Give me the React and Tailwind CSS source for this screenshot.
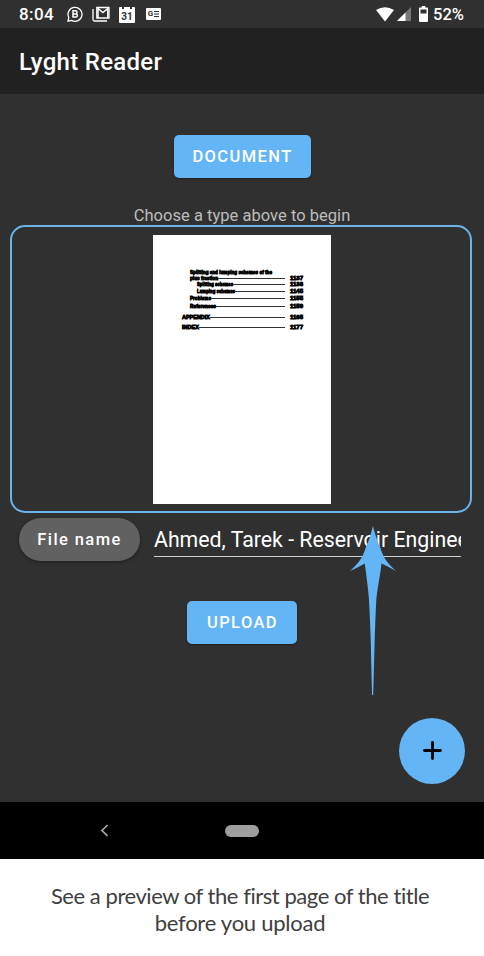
import React from "react";

const contents = [
  { label: "plus fraction", page: "1137", row: "h-[6px] pl-[8px]", len: 28 },
  { label: "Splitting schemes", page: "1138", row: "h-[6px] pl-[15px]", len: 36 },
  { label: "Lumping schemes", page: "1145", row: "h-[7px] pl-[15px]", len: 38 },
  { label: "Problems", page: "1155", row: "h-[7px] pl-[8px]", len: 21 },
  { label: "References", page: "1159", row: "h-[8px] pl-[8px]", len: 26 },
  { label: "APPENDIX", page: "1165", row: "h-[11px]", len: 28 },
  { label: "INDEX", page: "1177", row: "h-[10px]", len: 17 },
];

// A dense bold label fitted to a fixed width, as on a low resolution page scan.
function Ink({ children, len }) {
  return (
    <svg width={len} height="7" className="shrink-0 overflow-visible">
      <text
        x="0"
        y="5.6"
        textLength={len}
        lengthAdjust="spacingAndGlyphs"
        fontSize="5.2"
        fontWeight="700"
        stroke="#000"
        strokeWidth="0.8"
        className="font-['Liberation_Sans',sans-serif]"
      >
        {children}
      </text>
    </svg>
  );
}

function StatusBar() {
  return (
    <div className="flex h-7 items-center bg-[#303030] pl-[19px] pr-[18px] text-white">
      <span className="w-[48px] text-[17px] font-medium leading-7 tracking-[0.4px]">8:04</span>
      <svg width="16" height="16" viewBox="0 0 16 16" fill="none" stroke="#fff" strokeWidth="1.3">
        <path d="M1 15.2 1.8 11.5A7 7 0 1 1 4.6 14.4Z" />
        <path d="M6 4.8H8.5a1.5 1.5 0 0 1 0 3.1H6ZM6 7.9H8.8a1.6 1.6 0 0 1 0 3.2H6Z" strokeWidth="1.5" />
      </svg>
      <svg className="ml-[9px]" width="18" height="16" viewBox="0 0 18 16" fill="none" stroke="#fff">
        <path d="M1 3V13.5Q1 15 2.5 15H15" strokeWidth="1.3" />
        <path d="M4.8 12V1.5H17V12Z" strokeWidth="1.3" />
        <path d="M6 12V2.5L10.9 6.5 15.8 2.5V12" strokeWidth="1.5" />
      </svg>
      <div className="relative ml-[9px] mt-[1px] flex h-4 w-4 items-end justify-center rounded-[1px] bg-white text-[10px] font-bold leading-[13px] text-[#303030]">
        <span>31</span>
        <i className="absolute left-[3px] top-0 size-[2px] bg-[#303030]" />
        <i className="absolute right-[3px] top-0 size-[2px] bg-[#303030]" />
      </div>
      <div className="ml-[11px] flex h-3 w-[15px] items-center justify-center gap-[1px] rounded-[1px] bg-white text-[8px] font-bold text-[#303030]">
        <span>G</span>
        <svg width="5" height="6" stroke="#303030" strokeWidth="1"><path d="M0 .5H5M0 3H5M0 5.5H5" /></svg>
      </div>
      <svg className="ml-auto mr-[3px]" width="18" height="15" viewBox="0 0 18 15">
        <path d="M0 3Q9-2.5 18 3L9 14.5Z" fill="#fff" />
      </svg>
      <svg className="mr-[8px]" width="14" height="14" viewBox="0 0 14 14">
        <path d="M14 0V14H0Z" fill="#777" />
        <path d="M8.5 5.5V14H0Z" fill="#fff" />
      </svg>
      <svg className="mr-[5px]" width="9" height="16" viewBox="0 0 9 16">
        <path d="M2.7 0H6.3V1.5H8Q9 1.5 9 2.5V15Q9 16 8 16H1Q0 16 0 15V2.5Q0 1.5 1 1.5H2.7ZM1.5 3.5V7.5H7.5V3.5Z" fill="#fff" fillRule="evenodd" />
      </svg>
      <span className="w-[33px] whitespace-nowrap pt-[1px] text-[16.5px] font-medium leading-7">52%</span>
    </div>
  );
}

export default function App() {
  return (
    <div className="relative flex h-[956px] w-[484px] flex-col overflow-hidden bg-white font-['Roboto',sans-serif]">
      <StatusBar />
      <header className="flex h-[66px] items-center bg-[#212121] pl-[19px] pt-[1px]">
        <h1 className="text-[24px] font-medium tracking-[0.3px] text-white">Lyght Reader</h1>
      </header>

      <main className="relative flex h-[708px] flex-col items-center bg-[#303030] pt-[41px]">
        <button className="h-[43px] w-[137px] rounded-[5px] bg-[#64b5f6] pl-[1px] pt-[2px] text-[16.5px] font-medium tracking-[1.4px] text-white shadow-[0_1px_2px_#202020]">DOCUMENT</button>
        <p className="mt-7 h-[19px] text-[16.5px] leading-[19px] tracking-[0.03px] text-[#bdbdbd]">Choose a type above to begin</p>

        <section className="mr-[2px] flex h-72 w-[462px] justify-center rounded-[15px] border-2 border-[#6cb3e8] pl-[2px] pt-2">
          <div className="flex h-[269px] w-[178px] flex-col bg-white pl-[29px] pr-[28px] pt-[34px] text-black">
            <div className="flex h-[6px] items-end pl-[8px]">
              <Ink len={82}>Splitting and lumping schemes of the</Ink>
            </div>
            {contents.map((c) => (
              <div key={c.label} className={`flex items-end ${c.row}`}>
                <Ink len={c.len}>{c.label}</Ink>
                <i className="mb-[2px] h-px grow bg-[#333]" />
                <span className="ml-[5px] flex"><Ink len={13}>{c.page}</Ink></span>
              </div>
            ))}
          </div>
        </section>

        <div className="mt-[5px] flex h-[43px] w-[484px] pl-[19px]">
          <button className="h-[43px] w-[121px] rounded-full bg-[#616161] pt-[2px] text-[16.5px] font-medium tracking-[1.4px] text-white shadow-[0_1px_3px_#1c1c1c]">File name</button>
          <div className="ml-[14px] h-[39px] w-[307px] overflow-hidden whitespace-nowrap border-b border-[#d0d0d0] text-[21.3px] leading-[44px] text-white">
            Ahmed, Tarek - Reservoir Engineering
          </div>
        </div>

        <button className="mt-10 h-[43px] w-[110px] rounded-[5px] bg-[#64b5f6] pl-[1px] pt-[2px] text-[16.5px] font-medium tracking-[1.4px] text-white shadow-[0_1px_2px_#202020]">UPLOAD</button>

        <svg className="absolute left-[349px] top-[431px]" width="48" height="172" viewBox="0 0 48 172" fill="#64b5f6">
          <path d="M23.9 1C26 9 28 15 31 22C34 32 38 38 47 46Q40 42 32.5 38.5C31 52 28.5 62 27.3 75C26.5 90 26 104 25.6 118L24.2 170H23L21.8 118C21.5 104 20.7 90 20 75C19 62 17.5 52 15.8 38.5Q8 43 1 46C10 38 14 32 17 22C20 15 22 9 23.9 1Z" />
        </svg>
        <button className="absolute left-[399px] top-[623.5px] flex size-[66px] items-center justify-center rounded-full bg-[#64b5f6]">
          <svg width="19" height="19" viewBox="0 0 19 19" stroke="#000" strokeWidth="2.8" strokeLinecap="round"><path d="M9.5 1.5V17.5M1.5 9.5H17.5" /></svg>
        </button>
      </main>

      <nav className="flex h-[57px] items-center bg-black pl-[100px]">
        <svg width="9" height="13" viewBox="0 0 9 13" fill="none" stroke="#aaa" strokeWidth="1.7"><path d="M7.5 1 2 6.5 7.5 12" /></svg>
        <i className="ml-[116px] h-3 w-[34px] rounded-full bg-[#9e9e9e]" />
      </nav>

      <footer className="flex grow flex-col items-center pt-[23px] font-['Lato',sans-serif] text-[22px] leading-[27px] text-[#404040]">
        <p className="mr-[4px] whitespace-nowrap tracking-[-0.45px]">See a preview of the first page of the title</p>
        <p className="mr-[4px] whitespace-nowrap tracking-[-0.25px]">before you upload</p>
      </footer>
    </div>
  );
}
